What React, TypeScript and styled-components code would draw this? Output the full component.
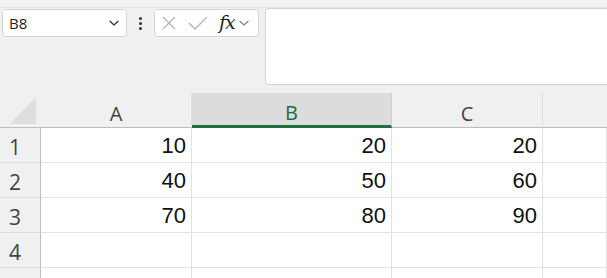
import React from "react";
import styled, { createGlobalStyle } from "styled-components";

const Global = createGlobalStyle`
  html, body { margin: 0; padding: 0; background: #f0f0f0; overflow: hidden; }
  * { box-sizing: border-box; }
`;

const Page = styled.div`
  width: 607px;
  height: 278px;
  background: #f0f0f0;
  display: flex;
  flex-direction: column;
  overflow: hidden;
`;

const TopStrip = styled.div`
  height: 8px;
  background: #f3f3f3;
  border-bottom: 1px solid #e6e6e6;
  flex-shrink: 0;
`;

const FormulaRow = styled.div`
  display: flex;
  align-items: flex-start;
  height: 77px;
  padding-left: 2px;
  flex-shrink: 0;
`;

const Box = styled.div<{ $w: number }>`
  width: ${(p) => p.$w}px;
  height: 28px;
  margin-top: 1px;
  background: #fff;
  border: 1px solid #d6d6d6;
  border-radius: 4px;
  display: flex;
  align-items: center;
  flex-shrink: 0;
`;

const NameText = styled.span`
  font-family: "Open Sans", "Noto Sans", sans-serif;
  font-size: 15px;
  color: #222;
  padding-left: 6px;
  flex: 1;
`;

const Dots = styled.div`
  width: 27px;
  height: 28px;
  margin-top: 1px;
  display: flex;
  flex-direction: column;
  align-items: center;
  justify-content: center;
  gap: 2px;
  flex-shrink: 0;
`;

const Dot = styled.span`
  width: 3px;
  height: 3px;
  border-radius: 50%;
  background: #333;
`;

const Fx = styled.span`
  font-family: "DejaVu Serif", "Liberation Serif", serif;
  font-style: italic;
  font-size: 19px;
  color: #222;
  margin-left: 11px;
  margin-top: -2px;
  letter-spacing: -1px;
`;

const Formula = styled.div`
  flex: 1;
  height: 77px;
  margin-left: 6px;
  background: #fff;
  border: 1px solid #d2d2d2;
  border-right: none;
  border-radius: 4px 0 0 4px;
`;

const Spacer = styled.div`
  height: 8px;
  flex-shrink: 0;
`;

const Grid = styled.div`
  display: grid;
  grid-template-columns: 41px 151px 200px 151px 1fr;
  grid-auto-rows: 35px;
`;

const Corner = styled.div`
  position: relative;
  background: #f0f0f0;
  border-bottom: 1px solid #bdbdbd;
`;

const Triangle = styled.div`
  position: absolute;
  right: 5px;
  bottom: 3px;
  width: 0;
  height: 0;
  border-left: 26px solid transparent;
  border-bottom: 27px solid #dedede;
`;

const ColHead = styled.div<{ $sel?: boolean }>`
  background: ${(p) => (p.$sel ? "#dcdcdc" : "#f0f0f0")};
  border-bottom: ${(p) => (p.$sel ? "3px solid #1e6e42" : "1px solid #bdbdbd")};
  border-right: 1px solid ${(p) => (p.$sel ? "#cfcfcf" : "#e0e0e0")};
  display: flex;
  align-items: center;
  justify-content: center;
  padding-top: 6px;
  font-family: "Open Sans", "Noto Sans", sans-serif;
  font-size: 20px;
  color: ${(p) => (p.$sel ? "#1e6e42" : "#444")};
`;

const RowHead = styled.div`
  background: #f0f0f0;
  border-right: 1px solid #bdbdbd;
  border-bottom: 1px solid #dcdcdc;
  display: flex;
  align-items: center;
  padding-left: 9px;
  padding-top: 3px;
  font-family: "Open Sans", "Noto Sans", sans-serif;
  font-size: 21px;
  color: #444;
`;

const Cell = styled.div`
  background: #fff;
  border-right: 1px solid #e1e1e1;
  border-bottom: 1px solid #e1e1e1;
  display: flex;
  align-items: center;
  justify-content: flex-end;
  padding-right: 5px;
  padding-top: 2px;
  font-family: "Liberation Sans", Arial, sans-serif;
  font-size: 22px;
  color: #111;
`;

const Chevron = ({ size = 12, color = "#333" }: { size?: number; color?: string }) => (
  <svg width={size} height={size} viewBox="0 0 12 12" fill="none">
    <path d="M2 4.2 L6 8 L10 4.2" stroke={color} strokeWidth="1.3" strokeLinecap="round" strokeLinejoin="round" />
  </svg>
);

const data = [
  ["10", "20", "20"],
  ["40", "50", "60"],
  ["70", "80", "90"],
  ["", "", ""],
];

export default function App() {
  return (
    <Page>
      <Global />
      <TopStrip />
      <FormulaRow>
        <Box $w={125}>
          <NameText>B8</NameText>
          <span style={{ marginRight: 6, display: "flex" }}>
            <Chevron />
          </span>
        </Box>
        <Dots>
          <Dot />
          <Dot />
          <Dot />
        </Dots>
        <Box $w={105}>
          <span style={{ marginLeft: 6, display: "flex" }}>
            <svg width="16" height="16" viewBox="0 0 16 16" fill="none">
              <path d="M2 2 L14 14 M14 2 L2 14" stroke="#b4b4b4" strokeWidth="1.3" />
            </svg>
          </span>
          <span style={{ marginLeft: 11, display: "flex" }}>
            <svg width="20" height="16" viewBox="0 0 20 16" fill="none">
              <path d="M1 8 L7 14 L19 2" stroke="#b4b4b4" strokeWidth="1.3" />
            </svg>
          </span>
          <Fx>fx</Fx>
          <span style={{ marginLeft: 3, display: "flex" }}>
            <Chevron color="#888" />
          </span>
        </Box>
        <Formula />
      </FormulaRow>
      <Spacer />
      <Grid>
        <Corner>
          <Triangle />
        </Corner>
        <ColHead>A</ColHead>
        <ColHead $sel>B</ColHead>
        <ColHead>C</ColHead>
        <ColHead style={{ borderRight: "none" }} />
        {data.map((row, i) => (
          <React.Fragment key={i}>
            <RowHead>{i + 1}</RowHead>
            {row.map((v, j) => (
              <Cell key={j}>{v}</Cell>
            ))}
            <Cell />
          </React.Fragment>
        ))}
        <RowHead />
        <Cell />
        <Cell />
        <Cell />
        <Cell />
      </Grid>
    </Page>
  );
}
